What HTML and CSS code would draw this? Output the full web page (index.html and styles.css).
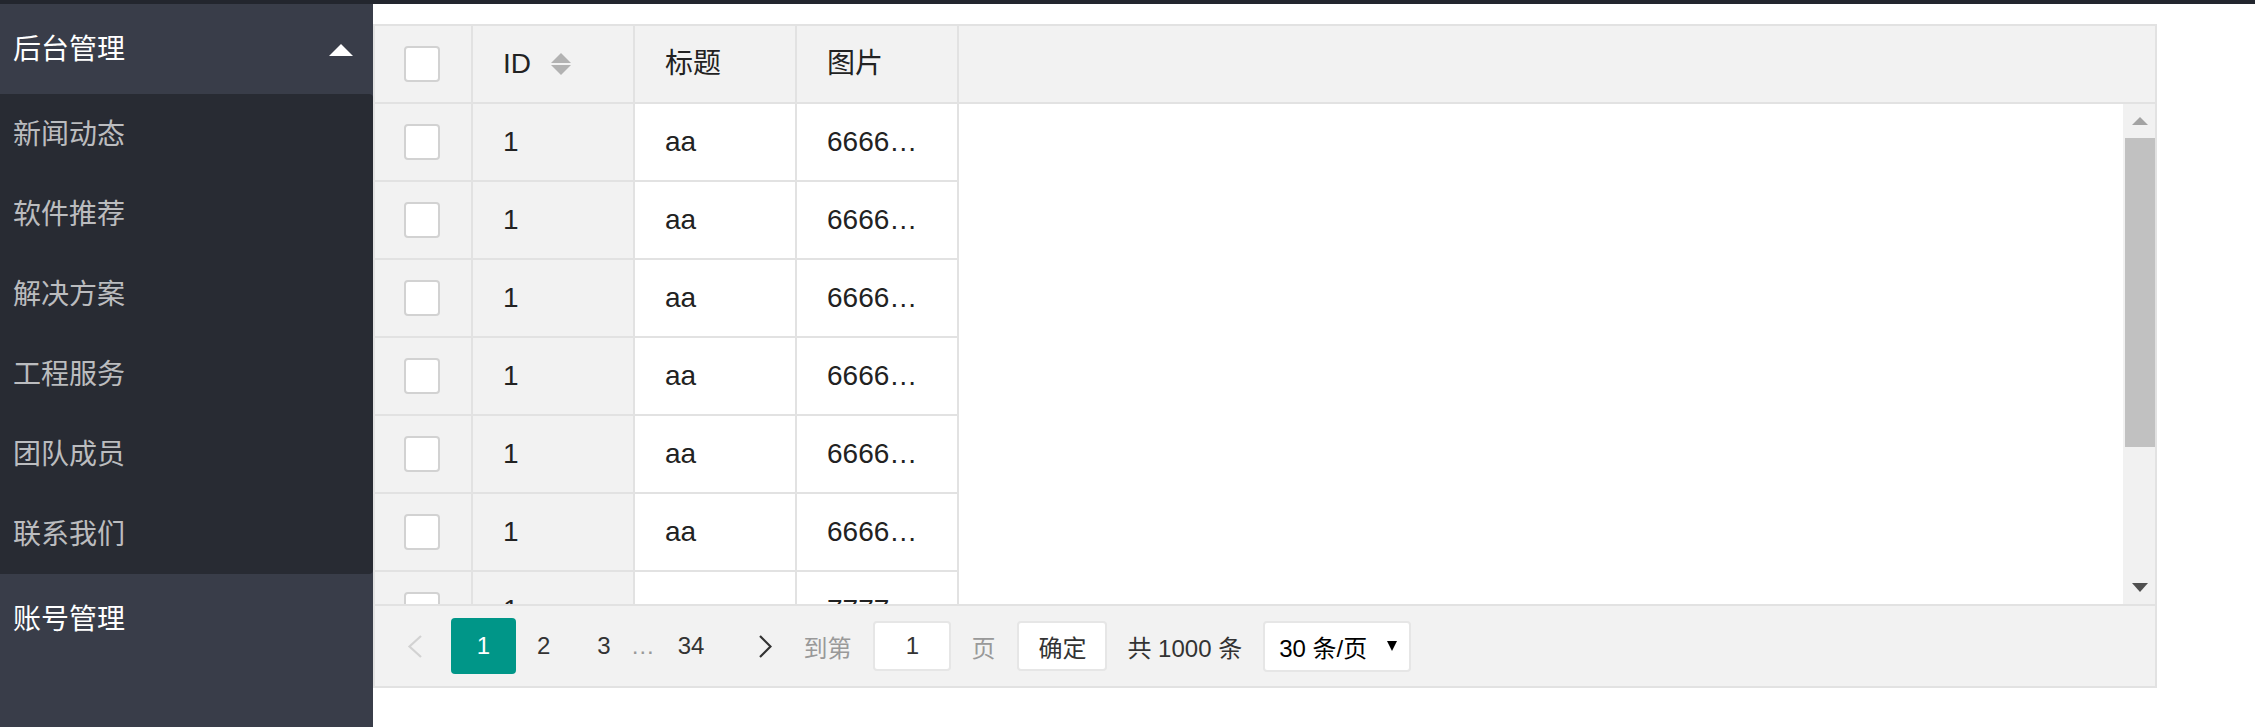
FILE: index.html
```html
<!DOCTYPE html>
<html lang="zh-CN">
<head>
    <meta charset="UTF-8">
    <meta name="viewport" content="width=device-width, initial-scale=1.0">
    <title>后台管理</title>
    <link rel="stylesheet" href="styles.css">
</head>
<body>
    <div class="topbar"></div>

    <div class="layout">
        <aside class="side">
            <div class="nav-title">后台管理<span class="nav-more"></span></div>
            <dl class="nav-child">
                <dd>新闻动态</dd>
                <dd>软件推荐</dd>
                <dd>解决方案</dd>
                <dd>工程服务</dd>
                <dd>团队成员</dd>
                <dd>联系我们</dd>
            </dl>
            <div class="nav-title">账号管理</div>
        </aside>

        <main class="content">
            <div class="table-box">
                <div class="table-head">
                    <div class="cell col-check"><span class="checkbox"></span></div>
                    <div class="cell col head-id">ID
                        <span class="sort"><i class="sort-up"></i><i class="sort-down"></i></span>
                    </div>
                    <div class="cell col">标题</div>
                    <div class="cell col">图片</div>
                    <div class="head-rest"></div>
                </div>

                <div class="table-main">
                    <div class="rows">
                        <div class="row">
                            <div class="cell col-check fixed"><span class="checkbox"></span></div>
                            <div class="cell col fixed">1</div>
                            <div class="cell col">aa</div>
                            <div class="cell col">666666666666</div>
                        </div>
                        <div class="row">
                            <div class="cell col-check fixed"><span class="checkbox"></span></div>
                            <div class="cell col fixed">1</div>
                            <div class="cell col">aa</div>
                            <div class="cell col">666666666666</div>
                        </div>
                        <div class="row">
                            <div class="cell col-check fixed"><span class="checkbox"></span></div>
                            <div class="cell col fixed">1</div>
                            <div class="cell col">aa</div>
                            <div class="cell col">666666666666</div>
                        </div>
                        <div class="row">
                            <div class="cell col-check fixed"><span class="checkbox"></span></div>
                            <div class="cell col fixed">1</div>
                            <div class="cell col">aa</div>
                            <div class="cell col">666666666666</div>
                        </div>
                        <div class="row">
                            <div class="cell col-check fixed"><span class="checkbox"></span></div>
                            <div class="cell col fixed">1</div>
                            <div class="cell col">aa</div>
                            <div class="cell col">666666666666</div>
                        </div>
                        <div class="row">
                            <div class="cell col-check fixed"><span class="checkbox"></span></div>
                            <div class="cell col fixed">1</div>
                            <div class="cell col">aa</div>
                            <div class="cell col">666666666666</div>
                        </div>
                        <div class="row">
                            <div class="cell col-check fixed"><span class="checkbox"></span></div>
                            <div class="cell col fixed">1</div>
                            <div class="cell col">aa</div>
                            <div class="cell col">777777777777</div>
                        </div>
                    </div>
                    <div class="spacer"></div>
                    <div class="scrollbar">
                        <div class="scroll-btn"><i class="arrow-up"></i></div>
                        <div class="scroll-track"><div class="scroll-thumb"></div></div>
                        <div class="scroll-btn"><i class="arrow-down"></i></div>
                    </div>
                </div>

                <div class="table-page">
                    <svg class="page-prev" width="16" height="23" viewBox="0 0 16 23">
                        <polyline points="14,1 2.5,11.5 14,22" fill="none" stroke="#d2d2d2" stroke-width="2.2"/>
                    </svg>
                    <span class="page-curr">1</span>
                    <span class="page-num n2">2</span>
                    <span class="page-num n3">3</span>
                    <span class="page-spr">…</span>
                    <span class="page-num n34">34</span>
                    <svg class="page-next" width="14" height="23" viewBox="0 0 14 23">
                        <polyline points="2,1 12.5,11.5 2,22" fill="none" stroke="#333" stroke-width="2.2"/>
                    </svg>
                    <span class="page-skip">到第</span>
                    <input class="page-input" type="text" value="1">
                    <span class="page-skip page-unit">页</span>
                    <button class="page-btn">确定</button>
                    <span class="page-count">共 1000 条</span>
                    <div class="page-limit">30 条/页<i class="limit-arrow"></i></div>
                </div>
            </div>
        </main>
    </div>
</body>
</html>
```

FILE: styles.css
```css
* {
    box-sizing: border-box;
}

body {
    margin: 0;
    font-family: "Liberation Sans", "Noto Sans CJK SC", sans-serif;
    background-color: #fff;
    color: #222;
}

.topbar {
    height: 4px;
    background-color: #23262e;
}

.layout {
    display: flex;
    height: 723px;
}

/* sidebar */
.side {
    width: 373px;
    flex-shrink: 0;
    background-color: #393d49;
    font-size: 28px;
}

.nav-title {
    height: 90px;
    display: flex;
    align-items: center;
    justify-content: space-between;
    padding: 0 20px 4px 13px;
    color: #fff;
}

.nav-more {
    width: 0;
    height: 0;
    margin-top: 6px;
    border-left: 12px solid transparent;
    border-right: 12px solid transparent;
    border-bottom: 12px solid #fff;
}

.nav-child {
    margin: 0;
    background-color: #282b33;
    border-radius: 0 4px 4px 0;
}

.nav-child dd {
    margin: 0;
    height: 80px;
    display: flex;
    align-items: center;
    padding: 0 0 5px 13px;
    color: rgba(255, 255, 255, 0.7);
}

/* table */
.content {
    flex: 1;
    padding-top: 20px;
}

.table-box {
    width: 1784px;
    border: 2px solid #e2e2e2;
    font-size: 28px;
}

.table-head {
    display: flex;
    height: 78px;
    background-color: #f2f2f2;
    border-bottom: 2px solid #e2e2e2;
}

.cell {
    height: 76px;
    line-height: 76px;
    padding: 0 30px;
    border-right: 2px solid #e2e2e2;
    white-space: nowrap;
    overflow: hidden;
    text-overflow: ellipsis;
}

.col-check {
    width: 98px;
    display: flex;
    align-items: center;
    justify-content: center;
    padding: 0;
}

.col {
    width: 162px;
}

.head-id {
    display: flex;
    align-items: center;
}

.head-rest {
    flex: 1;
}

.checkbox {
    width: 36px;
    height: 36px;
    margin-right: 2px;
    background-color: #fff;
    border: 2px solid #d2d2d2;
    border-radius: 4px;
}

.sort {
    display: flex;
    flex-direction: column;
    gap: 2px;
    margin-left: 20px;
}

.sort i {
    width: 0;
    height: 0;
    border-left: 10px solid transparent;
    border-right: 10px solid transparent;
}

.sort-up {
    border-bottom: 10px solid #b2b2b2;
}

.sort-down {
    border-top: 10px solid #b2b2b2;
}

.table-main {
    display: flex;
    height: 500px;
}

.rows {
    width: 584px;
    overflow: hidden;
}

.row {
    display: flex;
    height: 78px;
    border-bottom: 2px solid #e2e2e2;
}

.fixed {
    background-color: #f2f2f2;
}

.spacer {
    flex: 1;
}

/* scrollbar */
.scrollbar {
    width: 32px;
    display: flex;
    flex-direction: column;
    background-color: #f1f1f1;
}

.scroll-btn {
    height: 34px;
    display: flex;
    align-items: center;
    justify-content: center;
    padding-left: 2px;
}

.arrow-up {
    border-left: 8px solid transparent;
    border-right: 8px solid transparent;
    border-bottom: 8px solid #a3a3a3;
}

.arrow-down {
    border-left: 8px solid transparent;
    border-right: 8px solid transparent;
    border-top: 9px solid #505050;
}

.scroll-track {
    flex: 1;
    padding-left: 2px;
}

.scroll-thumb {
    height: 309px;
    background-color: #c1c1c1;
}

/* pager */
.table-page {
    height: 82px;
    display: flex;
    align-items: center;
    padding-left: 32px;
    border-top: 2px solid #e2e2e2;
    background-color: #f2f2f2;
    font-size: 24px;
    color: #333;
}

.page-curr {
    width: 65px;
    height: 56px;
    margin-left: 28px;
    display: flex;
    align-items: center;
    justify-content: center;
    background-color: #009688;
    border-radius: 4px;
    color: #fff;
}

.n2 {
    margin-left: 21px;
}

.n3 {
    margin-left: 47px;
}

.page-spr {
    margin-left: 20px;
    color: #999;
}

.n34 {
    margin-left: 23px;
}

.page-next {
    margin-left: 54px;
}

.page-skip {
    margin-left: 31px;
    color: #999;
}

.page-input {
    width: 78px;
    height: 50px;
    margin-left: 22px;
    padding: 0;
    border: 2px solid #e6e6e6;
    border-radius: 4px;
    background-color: #fff;
    font: inherit;
    color: #333;
    text-align: center;
}

.page-unit {
    margin-left: 20px;
}

.page-btn {
    width: 90px;
    height: 50px;
    margin-left: 22px;
    padding: 0;
    border: 2px solid #e6e6e6;
    border-radius: 4px;
    background-color: #fff;
    font: inherit;
    color: #333;
}

.page-count {
    margin-left: 20px;
}

.page-limit {
    width: 148px;
    height: 51px;
    margin-left: 21px;
    display: flex;
    align-items: center;
    justify-content: space-between;
    padding: 0 12px 0 14px;
    border: 2px solid #e6e6e6;
    border-radius: 4px;
    background-color: #fff;
    color: #000;
}

.limit-arrow {
    border-left: 5px solid transparent;
    border-right: 5px solid transparent;
    border-top: 10px solid #000;
}
```
